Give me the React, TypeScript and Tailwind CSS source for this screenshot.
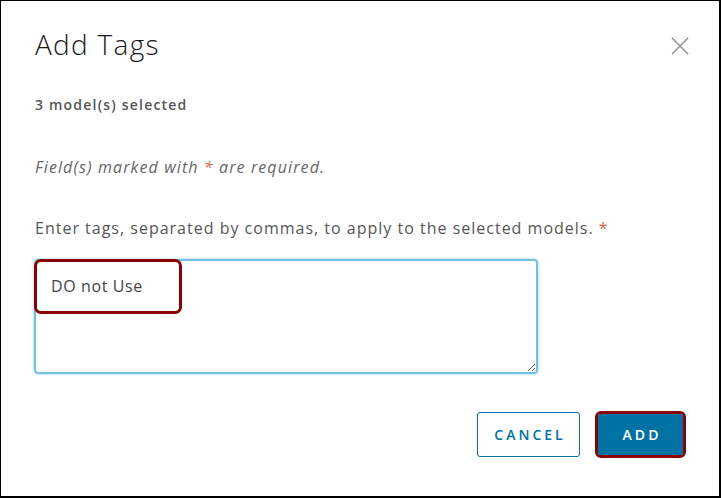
import React, { useState } from "react";

const font = { fontFamily: "'Open Sans', 'DejaVu Sans', sans-serif" };

const CloseIcon = () => (
  <svg width="18" height="18" viewBox="0 0 18 18" fill="none" stroke="#8c8c8c" strokeWidth="1.4">
    <path d="M1 1 L17 17 M17 1 L1 17" />
  </svg>
);

const App = () => {
  const [tags, setTags] = useState("DO not Use");

  return (
    <div
      className="w-[721px] h-[498px] bg-white border-t border-l border-r-2 border-b-2 border-black flex flex-col"
      style={font}
    >
      <div className="flex items-start justify-between pl-[34px] pr-[30px] pt-[24px]">
        <h1 className="text-[28px] font-light text-[#1a1a1a] leading-[38px] tracking-[1.3px]">Add Tags</h1>
        <button className="mt-[12px]">
          <CloseIcon />
        </button>
      </div>

      <div className="pl-[34px] pr-8 flex flex-col">
        <p className="mt-[32px] text-[14px] font-semibold text-[#565656] leading-5 tracking-[1.2px]">3 model(s) selected</p>
        <p className="mt-[40px] text-[16px] italic text-[#666] leading-6 tracking-[1.1px]">
          Field(s) marked with <span className="text-[#e0613d]">*</span> are required.
        </p>
        <p className="mt-[37px] text-[16px] text-[#565656] leading-6 tracking-[1px]">
          Enter tags, separated by commas, to apply to the selected models.{" "}
          <span className="text-[#e0613d]">*</span>
        </p>

        <div className="relative mt-[19px] -ml-px w-[504px] h-[115px]">
          <textarea
            value={tags}
            onChange={(e) => setTags(e.target.value)}
            className="w-full h-full rounded-[4px] border-2 border-[#72c1e1] shadow-[0_0_3px_#8fd0ec] px-[15px] pt-[13px] text-[16px] text-[#444] tracking-[0.6px] outline-none resize-y"
            style={font}
          />
          <div className="absolute left-0 top-0 w-[148px] h-[55px] rounded-[7px] border-[3px] border-[#8b0000] pointer-events-none" />
        </div>
      </div>

      <div className="flex-1" />

      <div className="flex justify-end items-center gap-[15px] pr-[33px] pb-[38px]">
        <button className="w-[103px] h-[45px] rounded-[3px] border border-[#0072a3] text-[#0072a3] text-[14px] font-semibold tracking-[3px] pl-[3px]">
          CANCEL
        </button>
        <div className="rounded-[6px] border-[3px] border-[#8b0000]">
          <button className="w-[85px] h-[41px] rounded-[2px] bg-[#0072a3] text-white text-[14px] font-semibold tracking-[3px] pl-[3px]">
            ADD
          </button>
        </div>
      </div>
    </div>
  );
};

export default App;
